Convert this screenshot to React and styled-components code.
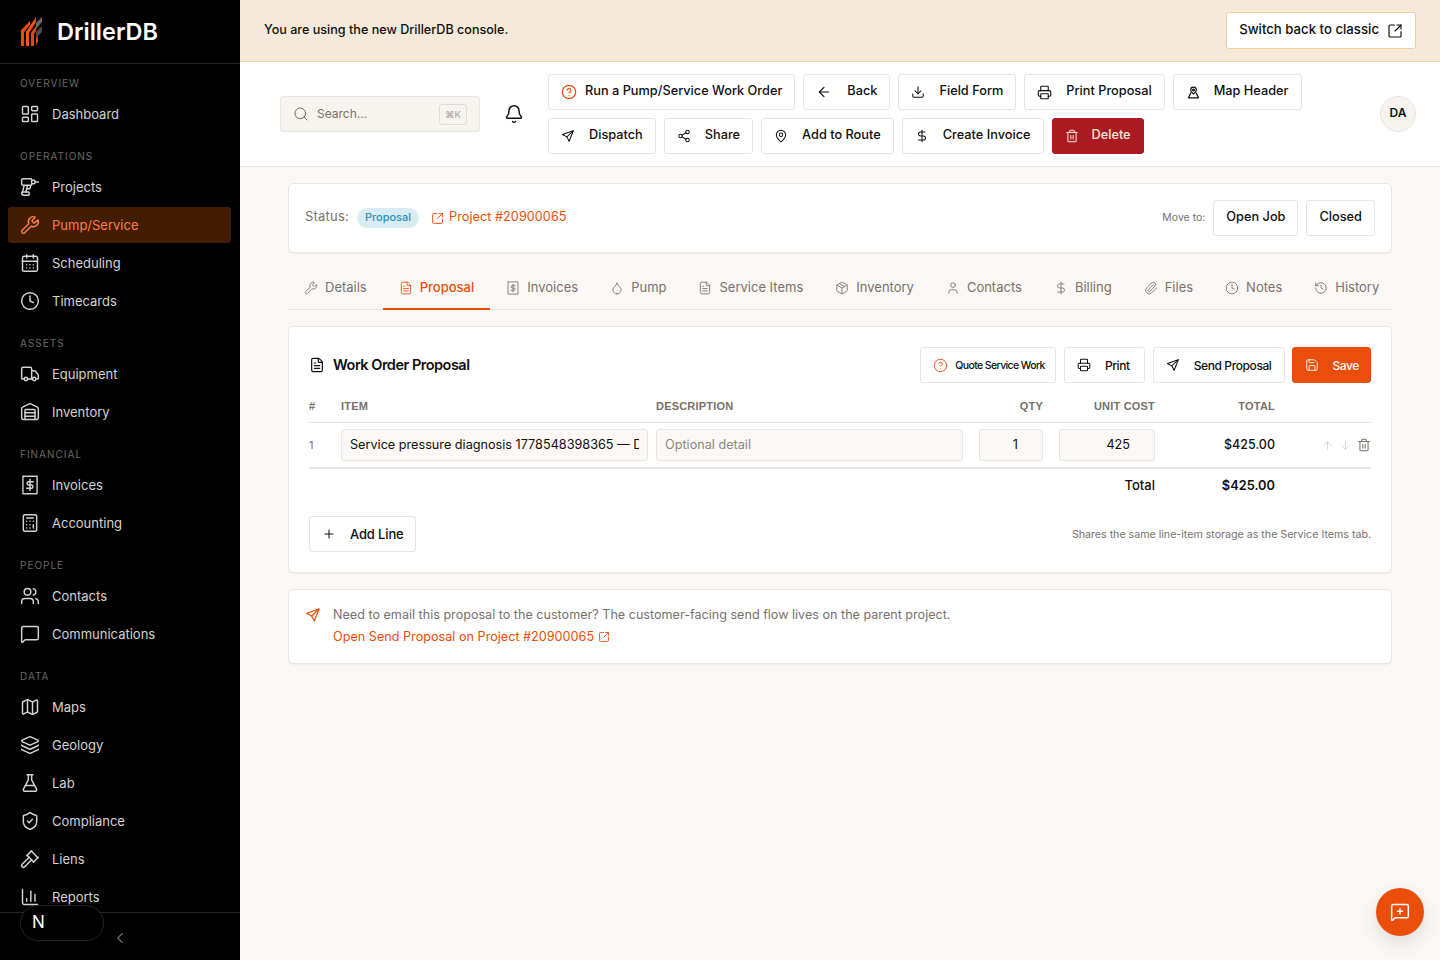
import React from "react";
import styled, { createGlobalStyle } from "styled-components";
import {
  ArrowDown,
  ArrowLeft,
  ArrowUp,
  Bell,
  Calculator,
  CalendarDays,
  ChartColumn,
  ChevronLeft,
  CircleHelp,
  Clock,
  DollarSign,
  Download,
  Droplet,
  Drill,
  FileText,
  FlaskConical,
  Gavel,
  History,
  Layers,
  LayoutDashboard,
  Map as MapIcon,
  MapPin,
  MessageSquare,
  MessageSquarePlus,
  Package,
  Paperclip,
  Plus,
  Printer,
  Save,
  Search,
  Share2,
  ShieldCheck,
  SquareArrowOutUpRight,
  Trash2,
  Truck,
  User,
  Users,
  Warehouse,
  Wrench,
} from "lucide-react";

const GlobalStyle = createGlobalStyle`
  * { box-sizing: border-box; }
  html, body { margin: 0; padding: 0; height: 100%; }
  body {
    font-family: Inter, "Liberation Sans", sans-serif;
    background: #fcf8f5;
    color: #0f0f0f;
    overflow: hidden;
  }
`;

const ReceiptIcon = ({ size = 20, strokeWidth = 1.75 }) => (
  <svg width={size} height={size} viewBox="0 0 24 24" fill="none" stroke="currentColor" strokeWidth={strokeWidth} strokeLinecap="round" strokeLinejoin="round">
    <path d="M3.5 1.5h17v21h-17z" strokeDasharray="2 1.2" />
    <path d="M16 8H10.5a2 2 0 0 0 0 4h3a2 2 0 0 1 0 4H8" />
    <path d="M12 5.5v13" />
  </svg>
);

const SendIcon = ({ size = 16, strokeWidth = 1.75 }) => (
  <svg width={size} height={size} viewBox="0 0 24 24" fill="none" stroke="currentColor" strokeWidth={strokeWidth} strokeLinecap="round" strokeLinejoin="round">
    <path d="M21 3 2.5 9.5l7.5 4 4 7.5L21 3z" />
    <path d="M10 13.5 21 3" />
  </svg>
);

const MapHeaderIcon = ({ size = 16 }) => (
  <svg width={size} height={size} viewBox="0 0 24 24" fill="none" stroke="currentColor" strokeWidth="1.9" strokeLinecap="round" strokeLinejoin="round">
    <path d="M12 14.5c-2.8-2.4-4.5-4.4-4.5-6.7a4.5 4.5 0 0 1 9 0c0 2.3-1.7 4.3-4.5 6.7z" />
    <circle cx="12" cy="8" r="1.5" />
    <path d="M7.5 13 4 20.5h16L16.5 13" />
  </svg>
);

const Logo = () => (
  <svg width="22" height="30" viewBox="0 0 22 30">
    <path d="M0 13 9 4v4l-6 7v14H0z" fill="#ea4e0a" />
    <path d="M5 15 15 0v5L8 16v13H5z" fill="#f2560c" />
    <path d="M10 16l5-7v5l-2 3v12h-3z" fill="#e04a08" />
    <path d="M15 6l6-6v5l-6 7z" fill="#6a6a6a" />
    <path d="M15 15l6-6v6l-4 4-2 2z" fill="#4a4a4a" />
    <path d="M15 21l2-2v6l-2 3z" fill="#d9480a" />
  </svg>
);

const navGroups = [
  { label: "Overview", items: [{ name: "Dashboard", Icon: LayoutDashboard }] },
  {
    label: "Operations",
    items: [
      { name: "Projects", Icon: Drill },
      { name: "Pump/Service", Icon: Wrench, active: true },
      { name: "Scheduling", Icon: CalendarDays },
      { name: "Timecards", Icon: Clock },
    ],
  },
  {
    label: "Assets",
    items: [
      { name: "Equipment", Icon: Truck },
      { name: "Inventory", Icon: Warehouse },
    ],
  },
  {
    label: "Financial",
    items: [
      { name: "Invoices", Icon: ReceiptIcon },
      { name: "Accounting", Icon: Calculator },
    ],
  },
  {
    label: "People",
    items: [
      { name: "Contacts", Icon: Users },
      { name: "Communications", Icon: MessageSquare },
    ],
  },
  {
    label: "Data",
    items: [
      { name: "Maps", Icon: MapIcon },
      { name: "Geology", Icon: Layers },
      { name: "Lab", Icon: FlaskConical },
      { name: "Compliance", Icon: ShieldCheck },
      { name: "Liens", Icon: Gavel },
      { name: "Reports", Icon: ChartColumn },
    ],
  },
];

const tabs = [
  { name: "Details", Icon: Wrench },
  { name: "Proposal", Icon: FileText, active: true },
  { name: "Invoices", Icon: ReceiptIcon },
  { name: "Pump", Icon: Droplet },
  { name: "Service Items", Icon: FileText },
  { name: "Inventory", Icon: Package },
  { name: "Contacts", Icon: User },
  { name: "Billing", Icon: DollarSign },
  { name: "Files", Icon: Paperclip },
  { name: "Notes", Icon: Clock },
  { name: "History", Icon: History },
];

const App = () => (
  <>
    <GlobalStyle />
    <Page>
      <Sidebar>
        <Brand>
          <Logo />
          <BrandName>DrillerDB</BrandName>
        </Brand>
        <Nav>
          {navGroups.map((group) => (
            <NavGroup key={group.label}>
              <GroupLabel>{group.label}</GroupLabel>
              {group.items.map(({ name, Icon, active }) => (
                <NavItem key={name} $active={active}>
                  <Icon size={20} strokeWidth={1.75} />
                  {name}
                </NavItem>
              ))}
            </NavGroup>
          ))}
        </Nav>
        <SidebarFoot>
          <Collapse>
            <ChevronLeft size={18} strokeWidth={1.5} />
          </Collapse>
        </SidebarFoot>
        <DevPill>N</DevPill>
      </Sidebar>

      <Main>
        <Banner>
          <BannerText>You are using the new DrillerDB console.</BannerText>
          <ClassicButton>
            <span>Switch back to classic</span>
            <SquareArrowOutUpRight size={16} strokeWidth={1.75} />
          </ClassicButton>
        </Banner>

        <Header>
          <SearchBox>
            <Search size={16} strokeWidth={1.5} color="#6b6560" />
            <SearchText>Search...</SearchText>
            <Kbd>⌘K</Kbd>
          </SearchBox>
          <BellWrap>
            <Bell size={20} strokeWidth={1.75} />
          </BellWrap>
          <Actions>
            <Button $gap={8}>
              <CircleHelp size={16} strokeWidth={1.75} color="#ea4e0a" />
              Run a Pump/Service Work Order
            </Button>
            <Button $gap={15}>
              <ArrowLeft size={16} strokeWidth={1.75} />
              Back
            </Button>
            <Button>
              <Download size={14} strokeWidth={1.75} />
              Field Form
            </Button>
            <Button>
              <Printer size={15} strokeWidth={1.75} />
              Print Proposal
            </Button>
            <Button $gap={13}>
              <MapHeaderIcon size={15} />
              Map Header
            </Button>
            <Button>
              <SendIcon size={14} />
              Dispatch
            </Button>
            <Button>
              <Share2 size={14} strokeWidth={1.75} />
              Share
            </Button>
            <Button>
              <MapPin size={14} strokeWidth={1.75} />
              Add to Route
            </Button>
            <Button>
              <DollarSign size={14} strokeWidth={1.75} />
              Create Invoice
            </Button>
            <Button $variant="danger" $gap={13}>
              <Trash2 size={14} strokeWidth={1.75} />
              Delete
            </Button>
          </Actions>
          <Avatar>DA</Avatar>
        </Header>

        <Content>
          <StatusCard>
            <StatusLabel>Status:</StatusLabel>
            <Badge>Proposal</Badge>
            <ProjectLink>
              <SquareArrowOutUpRight size={13} strokeWidth={1.75} />
              Project #20900065
            </ProjectLink>
            <MoveTo>
              <MoveLabel>Move to:</MoveLabel>
              <MoveButton>Open Job</MoveButton>
              <MoveButton>Closed</MoveButton>
            </MoveTo>
          </StatusCard>

          <Tabs>
            {tabs.map(({ name, Icon, active }) => (
              <Tab key={name} $active={active}>
                <Icon size={14} strokeWidth={1.5} />
                {name}
              </Tab>
            ))}
          </Tabs>

          <ProposalCard>
            <CardHead>
              <CardTitle>
                <FileText size={16} strokeWidth={1.75} />
                <span>Work Order Proposal</span>
              </CardTitle>
              <CardActions>
                <RoundButton $small $gap={7} $padRight={10}>
                  <CircleHelp size={15} strokeWidth={1.5} color="#ea4e0a" />
                  Quote Service Work
                </RoundButton>
                <RoundButton $padRight={14}>
                  <Printer size={14} strokeWidth={1.75} />
                  Print
                </RoundButton>
                <RoundButton>
                  <SendIcon size={14} />
                  Send Proposal
                </RoundButton>
                <SaveButton $primary $padRight={11}>
                  <Save size={14} strokeWidth={1.5} />
                  Save
                </SaveButton>
              </CardActions>
            </CardHead>

            <HeadRow>
              <span>#</span>
              <span>Item</span>
              <span>Description</span>
              <HeadRight $pad={16}>Qty</HeadRight>
              <HeadRight>Unit Cost</HeadRight>
              <HeadRight>Total</HeadRight>
              <span />
            </HeadRow>

            <LineRow>
              <LineNo>1</LineNo>
              <Field $right={8} readOnly value="Service pressure diagnosis 1778548398365 — Diagnosed low pressure" />
              <Field $right={16} placeholder="Optional detail" />
              <Field $right={16} $number readOnly value="1" />
              <Field $number readOnly value="425" />
              <Amount>$425.00</Amount>
              <RowTools>
                <ArrowUp size={13} strokeWidth={1.75} color="#d6d3d1" />
                <ArrowDown size={13} strokeWidth={1.75} color="#d6d3d1" />
                <Trash2 size={14} strokeWidth={1.75} color="#78716c" />
              </RowTools>
            </LineRow>

            <TotalRow>
              <TotalLabel>Total</TotalLabel>
              <TotalValue>$425.00</TotalValue>
            </TotalRow>

            <CardFoot>
              <RoundButton $plain $padRight={11}>
                <Plus size={14} strokeWidth={1.75} />
                Add Line
              </RoundButton>
              <FootNote>Shares the same line-item storage as the Service Items tab.</FootNote>
            </CardFoot>
          </ProposalCard>

          <NoteCard>
            <NoteIcon>
              <SendIcon size={16} />
            </NoteIcon>
            <div>
              <NoteText>Need to email this proposal to the customer? The customer-facing send flow lives on the parent project.</NoteText>
              <NoteLink>
                Open Send Proposal on Project #20900065
                <SquareArrowOutUpRight size={12} strokeWidth={1.75} />
              </NoteLink>
            </div>
          </NoteCard>
        </Content>

        <Fab>
          <MessageSquarePlus size={20} strokeWidth={1.75} />
        </Fab>
      </Main>
    </Page>
  </>
);

const Page = styled.div`
  display: flex;
  width: 1440px;
  height: 960px;
  overflow: hidden;
`;

const Sidebar = styled.aside`
  position: relative;
  display: flex;
  flex-direction: column;
  flex: 0 0 240px;
  height: 960px;
  background: #000;
  color: #d6d3d1;
`;

const Brand = styled.div`
  display: flex;
  align-items: center;
  gap: 14px;
  flex: 0 0 64px;
  padding: 0 20px 0 21px;
  border-bottom: 1px solid #262626;
`;

const BrandName = styled.div`
  color: #fff;
  font-size: 23.5px;
  font-weight: 600;
`;

const Nav = styled.nav`
  flex: 1;
  min-height: 0;
  overflow: hidden;
  padding: 12px 9px 0 8px;
`;

const NavGroup = styled.div`
  margin-bottom: 17px;
`;

const GroupLabel = styled.div`
  height: 14px;
  padding-left: 12px;
  margin-bottom: 6px;
  color: #6b6865;
  font-size: 10px;
  line-height: 14px;
  letter-spacing: 1px;
  text-transform: uppercase;
`;

const NavItem = styled.div`
  display: flex;
  align-items: center;
  gap: 12px;
  height: 36px;
  margin-bottom: 2px;
  padding: 0 12px;
  border-radius: 3px;
  font-size: 13px;
  font-weight: 400;
  background: ${(p) => (p.$active ? "#431d03" : "transparent")};
  color: ${(p) => (p.$active ? "#f97f4a" : "#d6d3d1")};
`;

const SidebarFoot = styled.div`
  display: flex;
  flex: 0 0 48px;
  align-items: center;
  padding-left: 111px;
  border-top: 1px solid #262626;
`;

const Collapse = styled.div`
  display: flex;
  margin-top: 2px;
  color: #78716c;
`;

const DevPill = styled.div`
  position: absolute;
  left: 20px;
  top: 905px;
  width: 84px;
  height: 36px;
  padding-left: 11px;
  border: 1px solid #262626;
  border-radius: 18px;
  background: #000;
  color: #fff;
  font-size: 17px;
  font-weight: 400;
  line-height: 33px;
`;

const Main = styled.main`
  position: relative;
  display: flex;
  flex-direction: column;
  flex: 1;
  min-width: 0;
`;

const Banner = styled.div`
  display: flex;
  align-items: center;
  justify-content: space-between;
  flex: 0 0 62px;
  padding: 0 24px;
  background: #f5e9d9;
  border-bottom: 1px solid #ebd5b5;
  font-size: 13px;
  font-weight: 500;
`;

const BannerText = styled.span`
  margin-bottom: 3px;
  font-size: 12.6px;
`;

const ClassicButton = styled.div`
  display: flex;
  align-items: center;
  gap: 8px;
  height: 37px;
  padding: 0 12px;
  background: #fff;
  border: 1px solid #edcfa0;
  border-radius: 3px;
  font-size: 13.2px;
  font-weight: 500;
  span {
    margin-bottom: 3px;
  }
`;

const Header = styled.header`
  display: flex;
  align-items: center;
  flex: 0 0 105px;
  padding: 0 24px 0 40px;
  background: #fff;
  border-bottom: 1px solid #e7e5e3;
`;

const SearchBox = styled.div`
  display: flex;
  align-items: center;
  gap: 8px;
  width: 200px;
  height: 36px;
  padding: 0 12px;
  background: #f7f3ef;
  border: 1px solid #e7e5e3;
  border-radius: 3px;
`;

const SearchText = styled.span`
  flex: 1;
  margin-bottom: 2px;
  color: #78716c;
  font-size: 12px;
`;

const Kbd = styled.span`
  padding: 2px 5px;
  border: 1px solid #dedbd8;
  border-radius: 3px;
  color: #a8a29e;
  font-size: 9.5px;
  line-height: 15px;
`;

const BellWrap = styled.div`
  display: flex;
  justify-content: center;
  width: 68px;
`;

const Actions = styled.div`
  display: flex;
  flex-wrap: wrap;
  gap: 8px;
  width: 790px;
`;

const Button = styled.div`
  display: flex;
  align-items: center;
  gap: ${(p) => p.$gap || 14}px;
  height: 36px;
  padding: 0 12px 3px;
  border-radius: 3px;
  font-size: 12.75px;
  font-weight: 500;
  white-space: nowrap;
  background: ${(p) => (p.$variant === "danger" ? "#ab1a20" : "#fff")};
  border: 1px solid ${(p) => (p.$variant === "danger" ? "#ab1a20" : "#e7e5e3")};
  color: ${(p) => (p.$variant === "danger" ? "#fde4d8" : "#0f0f0f")};
  svg {
    margin-top: 3px;
  }
`;

const Avatar = styled.div`
  display: flex;
  align-items: center;
  justify-content: center;
  width: 36px;
  height: 36px;
  margin-left: auto;
  padding-bottom: 3px;
  background: #f7f3ef;
  border: 1px solid #e7e5e3;
  border-radius: 50%;
  font-size: 12px;
  font-weight: 600;
`;

const Content = styled.div`
  flex: 1;
  padding: 16px 48px 0;
`;

const Card = styled.section`
  background: #fff;
  border: 1px solid #e9e6e3;
  border-radius: 5px;
  box-shadow: 0 1px 2px rgba(0, 0, 0, 0.05);
`;

const StatusCard = styled(Card)`
  display: flex;
  align-items: center;
  height: 70px;
  padding: 0 16px;
  font-size: 13px;
`;

const StatusLabel = styled.span`
  margin-bottom: 4px;
  color: #78716c;
  letter-spacing: 0.2px;
`;

const Badge = styled.span`
  margin-left: 8px;
  padding: 0 8px;
  height: 20px;
  background: #d9ebf3;
  border-radius: 10px;
  color: #2f8fb8;
  font-size: 11px;
  font-weight: 500;
  line-height: 19px;
`;

const ProjectLink = styled.span`
  display: flex;
  align-items: center;
  gap: 5px;
  margin-left: 12px;
  margin-bottom: 3px;
  color: #ea4e0a;
  font-size: 12.75px;
  svg {
    margin-top: 3px;
  }
`;

const MoveTo = styled.div`
  display: flex;
  align-items: center;
  gap: 8px;
  margin-left: auto;
`;

const MoveLabel = styled.span`
  margin-bottom: 2px;
  color: #78716c;
  font-size: 10.5px;
`;

const MoveButton = styled.div`
  display: flex;
  align-items: center;
  height: 36px;
  padding: 0 12px 3px;
  border: 1px solid #e7e5e3;
  border-radius: 3px;
  font-size: 12.75px;
  font-weight: 500;
`;

const Tabs = styled.div`
  display: flex;
  height: 41px;
  margin: 16px 0 16px;
  border-bottom: 1px solid #e7e5e3;
`;

const Tab = styled.div`
  display: flex;
  align-items: center;
  gap: 7px;
  height: 41px;
  padding: 0 16px 3px;
  border-bottom: 2px solid ${(p) => (p.$active ? "#ea4e0a" : "transparent")};
  color: ${(p) => (p.$active ? "#ea4e0a" : "#78716c")};
  font-size: 13px;
  font-weight: ${(p) => (p.$active ? 500 : 400)};
  white-space: nowrap;
  svg {
    margin-top: 2px;
  }
`;

const ProposalCard = styled(Card)`
  height: 247px;
  padding: 20px;
`;

const CardHead = styled.div`
  display: flex;
  align-items: center;
  justify-content: space-between;
  height: 36px;
`;

const CardTitle = styled.h2`
  display: flex;
  align-items: center;
  gap: 8px;
  margin: 0;
  font-size: 14.5px;
  font-weight: 600;
  letter-spacing: -0.5px;
  span {
    margin-bottom: 2px;
  }
`;

const CardActions = styled.div`
  display: flex;
  gap: 8px;
`;

const RoundButton = styled.div`
  display: flex;
  align-items: center;
  gap: ${(p) => p.$gap || 14}px;
  height: 36px;
  padding: 0 ${(p) => p.$padRight || 12}px 0 12px;
  border-radius: 3px;
  font-size: ${(p) => (p.$small ? "10.5px" : p.$plain ? "13px" : "12px")};
  font-weight: 500;
  letter-spacing: ${(p) => (p.$small ? "-0.6px" : p.$plain ? "-0.15px" : "-0.4px")};
  white-space: nowrap;
  background: ${(p) => (p.$primary ? "#ea4e0a" : "#fff")};
  border: 1px solid ${(p) => (p.$primary ? "#ea4e0a" : "#e7e5e3")};
  color: ${(p) => (p.$primary ? "#fff" : "#0f0f0f")};
`;

const SaveButton = styled(RoundButton)`
  margin-left: -1px;
`;

const columns = "32px 315px 323px 80px 96px 120px 96px";

const HeadRow = styled.div`
  display: grid;
  grid-template-columns: ${columns};
  align-items: center;
  height: 33px;
  margin-top: 7px;
  border-bottom: 1px solid #e7e5e3;
  color: #78716c;
  font-family: "Liberation Sans", Arial, sans-serif;
  font-size: 11px;
  font-weight: 700;
  letter-spacing: 0.2px;
  text-transform: uppercase;
`;

const HeadRight = styled.span`
  text-align: right;
  padding-right: ${(p) => p.$pad || 0}px;
`;

const LineRow = styled.div`
  display: grid;
  grid-template-columns: ${columns};
  align-items: center;
  height: 46px;
  border-bottom: 2px solid #e7e5e3;
`;

const LineNo = styled.span`
  color: #78716c;
  font-size: 11px;
`;

const Field = styled.input`
  width: calc(100% - ${(p) => p.$right || 0}px);
  height: 32px;
  padding: 0 ${(p) => (p.$number ? "24px" : "8px")} 2px 8px;
  background: #fcf8f5;
  border: 1px solid #e7e5e3;
  border-radius: 3px;
  outline: none;
  color: #0f0f0f;
  font-family: inherit;
  font-size: 12.66px;
  text-align: ${(p) => (p.$number ? "right" : "left")};
  &::placeholder {
    color: #8a8580;
  }
`;

const Amount = styled.span`
  margin-bottom: 2px;
  font-size: 12.5px;
  font-weight: 500;
  text-align: right;
`;

const RowTools = styled.div`
  display: flex;
  align-items: center;
  justify-content: flex-end;
  gap: 5px;
`;

const TotalRow = styled.div`
  display: flex;
  align-items: center;
  justify-content: flex-end;
  height: 32px;
  padding-right: 96px;
  font-size: 13px;
`;

const TotalLabel = styled.span`
  font-weight: 500;
`;

const TotalValue = styled.span`
  width: 120px;
  font-size: 12.8px;
  font-weight: 600;
  text-align: right;
`;

const CardFoot = styled.div`
  display: flex;
  align-items: center;
  justify-content: space-between;
  margin-top: 15px;
`;

const FootNote = styled.span`
  color: #78716c;
  font-size: 10.65px;
`;

const NoteCard = styled(Card)`
  display: flex;
  gap: 12px;
  height: 75px;
  margin-top: 16px;
  padding: 14px 16px;
`;

const NoteIcon = styled.div`
  padding-top: 3px;
  color: #ea4e0a;
`;

const NoteText = styled.div`
  color: #78716c;
  font-size: 12.6px;
  line-height: 22px;
`;

const NoteLink = styled.div`
  display: flex;
  align-items: center;
  gap: 4px;
  color: #ea4e0a;
  font-size: 12.65px;
  line-height: 22px;
`;

const Fab = styled.div`
  position: absolute;
  right: 16px;
  bottom: 24px;
  display: flex;
  align-items: center;
  justify-content: center;
  width: 48px;
  height: 48px;
  background: #ea4e0a;
  border-radius: 50%;
  color: #fff;
  box-shadow: 0 8px 20px rgba(0, 0, 0, 0.12);
`;

export default App;
